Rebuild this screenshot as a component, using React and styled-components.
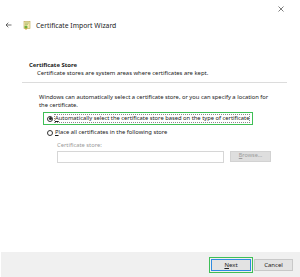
import React from 'react'
import styled, { createGlobalStyle } from 'styled-components'

const Global = createGlobalStyle`
  html, body { margin: 0; padding: 0; background: #fff; }
  body { font-family: "Noto Sans", "Open Sans", sans-serif; color: #1a1a1a; }
`

const Window = styled.div`
  width: 300px;
  height: 277px;
  display: flex;
  flex-direction: column;
  background: #fff;
  overflow: hidden;
`

const CloseRow = styled.div`
  height: 18px;
  display: flex;
  justify-content: flex-end;
  align-items: center;
  padding-right: 16px;
  color: #333;
`

const HeaderRow = styled.div`
  height: 14px;
  display: flex;
  align-items: center;
  gap: 4px;
  padding-left: 5px;
  font-size: 6.8px;
  color: #222;
`

const Back = styled.span`
  display: flex;
  width: 8px;
  margin-right: 6px;
`

const Heading = styled.div`
  padding: 29px 0 5px 29px;
  font-size: 5.9px;
  line-height: 8px;
`

const HeadTitle = styled.div`
  font-weight: 700;
`

const HeadSub = styled.div`
  padding-left: 8px;
`

const Rule = styled.div`
  height: 1px;
  background: #dcdcdc;
  margin: 0 13px 0 22px;
`

const Body = styled.div`
  padding: 11px 0 0 39px;
  font-size: 5.8px;
  line-height: 7.5px;
  display: flex;
  flex-direction: column;
`

const Option = styled.label`
  display: flex;
  align-items: center;
  gap: 2px;
  height: 13px;
  width: ${p => (p.$boxed ? '210px' : 'auto')};
  margin-left: 4px;
  margin-top: ${p => p.$top}px;
  padding-left: 3px;
  box-sizing: border-box;
  border: 1.5px solid ${p => (p.$boxed ? '#3fbf56' : 'transparent')};
`

const Radio = styled.span`
  width: 6px;
  height: 6px;
  border-radius: 50%;
  border: 0.8px solid #333;
  box-sizing: border-box;
  display: flex;
  align-items: center;
  justify-content: center;
  flex-shrink: 0;
  &::after {
    content: '';
    width: 3px;
    height: 3px;
    border-radius: 50%;
    background: ${p => (p.$checked ? '#222' : 'transparent')};
  }
`

const Focus = styled.span`
  outline: ${p => (p.$focus ? '0.5px dotted #888' : 'none')};
  line-height: 7px;
  white-space: nowrap;
  u { text-decoration: underline; }
`

const StoreLabel = styled.div`
  margin: 3px 0 1px 18px;
  color: #9a9a9a;
`

const StoreRow = styled.div`
  display: flex;
  gap: 6px;
  margin-left: 18px;
`

const Input = styled.div`
  width: 167px;
  height: 12px;
  border: 1px solid #d6d6d6;
  box-sizing: border-box;
`

const Browse = styled.div`
  width: 41px;
  height: 11px;
  background: #dedede;
  border: 1px solid #d2d2d2;
  box-sizing: border-box;
  color: #9c9c9c;
  font-size: 5.5px;
  display: flex;
  align-items: center;
  justify-content: center;
`

const Footer = styled.div`
  margin-top: auto;
  height: 25px;
  background: #f0f0f0;
  border-left: 1px solid #fff;
  display: flex;
  align-items: center;
  justify-content: flex-end;
  gap: 1px;
  padding-right: 7px;
`

const Ring = styled.div`
  padding: 1px;
  border: 1.5px solid #3fbf56;
`

const Button = styled.div`
  width: ${p => (p.$primary ? '40px' : '39px')};
  height: 12px;
  box-sizing: border-box;
  border: 1px solid ${p => (p.$primary ? '#2f8ae0' : '#c8c8c8')};
  background: #e3e3e3;
  font-size: 6px;
  display: flex;
  align-items: center;
  justify-content: center;
  color: #222;
  u { text-decoration: underline; }
`

const CertIcon = () => (
  <svg width="9" height="9" viewBox="0 0 9 9">
    <rect x="1" y="0.5" width="6" height="7" fill="#f4e9b0" stroke="#b8a44c" strokeWidth="0.6" />
    <path d="M2 2h4M2 3.3h3" stroke="#8aa24a" strokeWidth="0.6" />
    <circle cx="3" cy="6" r="1.6" fill="#6fae3a" />
    <path d="M2.3 7.2L2 8.8L3 8.2L4 8.8L3.7 7.2" fill="#d2a12b" />
  </svg>
)

export default function App() {
  return (
    <Window>
      <Global />
      <CloseRow>
        <svg width="6" height="6" viewBox="0 0 6 6">
          <path d="M0.5 0.5L5.5 5.5M5.5 0.5L0.5 5.5" stroke="#444" strokeWidth="0.7" />
        </svg>
      </CloseRow>
      <HeaderRow>
        <Back>
          <svg width="7" height="6" viewBox="0 0 7 6">
            <path d="M6.5 3H1M3.3 0.7L1 3l2.3 2.3" stroke="#333" strokeWidth="0.7" fill="none" />
          </svg>
        </Back>
        <CertIcon />
        <span>Certificate Import Wizard</span>
      </HeaderRow>
      <Heading>
        <HeadTitle>Certificate Store</HeadTitle>
        <HeadSub>Certificate stores are system areas where certificates are kept.</HeadSub>
      </Heading>
      <Rule />
      <Body>
        <div>Windows can automatically select a certificate store, or you can specify a location for</div>
        <div>the certificate.</div>
        <Option $boxed $top={3}>
          <Radio $checked />
          <Focus $focus>
            <u>A</u>utomatically select the certificate store based on the type of certificate
          </Focus>
        </Option>
        <Option $top={1}>
          <Radio />
          <Focus>
            <u>P</u>lace all certificates in the following store
          </Focus>
        </Option>
        <StoreLabel>Certificate store:</StoreLabel>
        <StoreRow>
          <Input />
          <Browse>
            <span><u>B</u>rowse...</span>
          </Browse>
        </StoreRow>
      </Body>
      <Footer>
        <Ring>
          <Button $primary>
            <span><u>N</u>ext</span>
          </Button>
        </Ring>
        <Button>Cancel</Button>
      </Footer>
    </Window>
  )
}
